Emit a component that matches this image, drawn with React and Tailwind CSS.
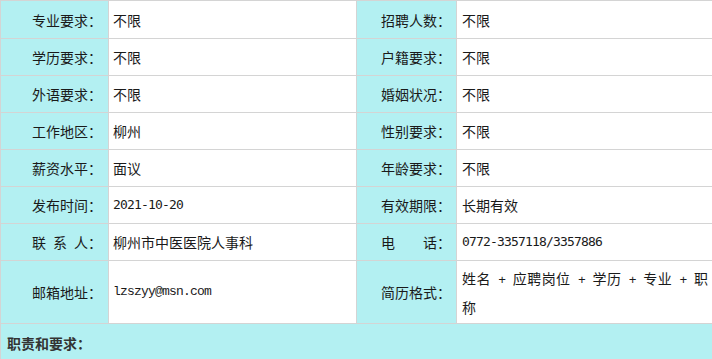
export default function App() {
  const cjk = { fontFamily: '"Noto Sans CJK SC", "Noto Sans", sans-serif' };
  const Sp = ({ n = 1 }) => <span className="inline-block" style={{ width: 7 * n }} />;
  const Mono = ({ children }) => (
    <span className="font-['Liberation_Mono',monospace] text-[13px] tracking-[-0.8px] whitespace-pre">{children}</span>
  );
  const Num = ({ children }) => (
    <span className="font-['DejaVu_Sans_Mono',monospace] text-[13px] tracking-[-0.83px]">{children}</span>
  );
  const Label = ({ children, right }) => (
    <div className={`bg-[#b3f0f2] flex items-center justify-end ${right ? 'pr-[5px]' : 'pr-[6px]'} whitespace-nowrap`}>
      {children}
    </div>
  );
  const Value = ({ children, right }) => (
    <div className={`bg-white flex items-center ${right ? 'pl-[5px] pr-[5px]' : 'pl-[4px]'}`}>{children}</div>
  );
  return (
    <div className="w-[712px] h-[359px] overflow-hidden bg-white">
      <div
        className="w-[714px] grid grid-cols-[107px_247px_99px_256px] grid-rows-[37px_36px_36px_36px_36px_36px_36px_62px_48px] gap-px p-px bg-[#d4d4d4] text-[14px] leading-[26px] text-[#1a1a1a]"
        style={cjk}
      >
        <Label>专业要求：</Label>
        <Value>不限</Value>
        <Label right>招聘人数：</Label>
        <Value right>不限</Value>

        <Label>学历要求：</Label>
        <Value>不限</Value>
        <Label right>户籍要求：</Label>
        <Value right>不限</Value>

        <Label>外语要求：</Label>
        <Value>不限</Value>
        <Label right>婚姻状况：</Label>
        <Value right>不限</Value>

        <Label>工作地区：</Label>
        <Value>柳州</Value>
        <Label right>性别要求：</Label>
        <Value right>不限</Value>

        <Label>薪资水平：</Label>
        <Value>面议</Value>
        <Label right>年龄要求：</Label>
        <Value right>不限</Value>

        <Label>发布时间：</Label>
        <Value><Num>2021-10-20</Num></Value>
        <Label right>有效期限：</Label>
        <Value right>长期有效</Value>

        <Label>联<Sp />系<Sp />人：</Label>
        <Value>柳州市中医医院人事科</Value>
        <Label right>电<Sp n={4} />话：</Label>
        <Value right><Num>0772-3357118/3357886</Num></Value>

        <Label>邮箱地址：</Label>
        <Value><Mono>lzszyy@msn.com</Mono></Value>
        <Label right>简历格式：</Label>
        <div className="bg-white flex items-center pl-[5px] pr-[5px]">
          <div className="text-justify w-full">
            姓名<Mono> + </Mono>应聘岗位<Mono> + </Mono>学历<Mono> + </Mono>专业<Mono> + </Mono>职称
          </div>
        </div>

        <div className="col-span-4 bg-[#b3f0f2] pl-[6px] pt-[6px] font-bold text-[#333]">职责和要求：</div>
      </div>
    </div>
  );
}
